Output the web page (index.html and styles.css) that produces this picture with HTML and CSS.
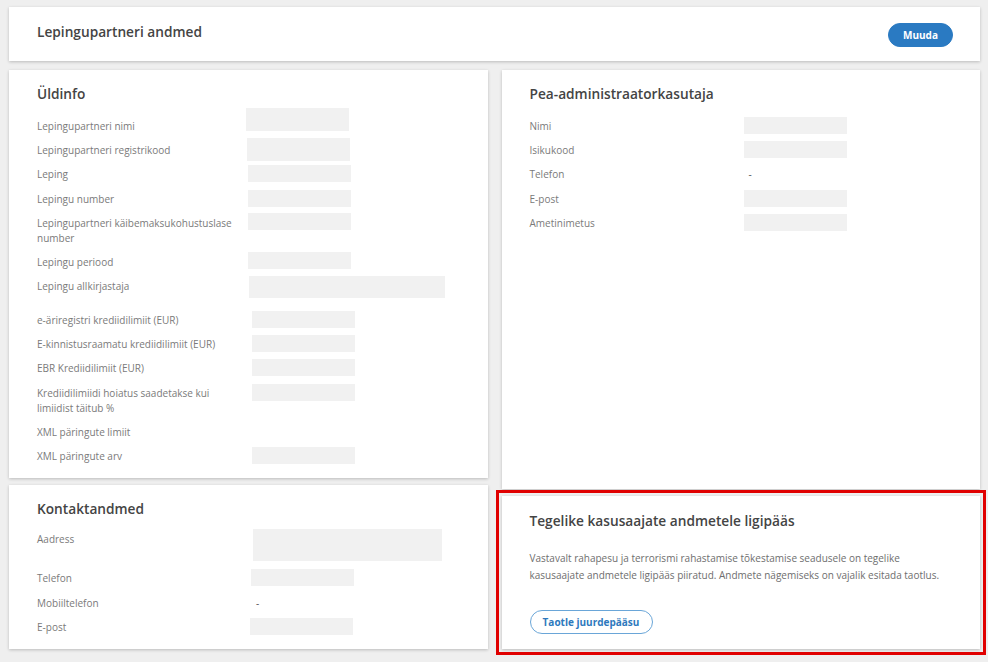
FILE: index.html
```html
<!DOCTYPE html>
<html lang="et">
<head>
<meta charset="utf-8">
<title>Lepingupartneri andmed</title>
<link rel="stylesheet" href="styles.css">
</head>
<body>
<div class="page">
  <header class="card topbar">
    <h1 class="topbar-title">Lepingupartneri andmed</h1>
    <button class="btn btn-primary" type="button">Muuda</button>
  </header>

  <div class="columns">
    <div class="col">
      <section class="card panel">
        <h2 class="panel-title">Üldinfo</h2>
        <div class="fields">
          <div class="row"><span class="label">Lepingupartneri nimi</span><span class="ph ph-tall ph-up"></span></div>
          <div class="row"><span class="label">Lepingupartneri registrikood</span><span class="ph ph-tall ph-mid"></span></div>
          <div class="row"><span class="label">Leping</span><span class="ph"></span></div>
          <div class="row"><span class="label">Lepingu number</span><span class="ph"></span></div>
          <div class="row"><span class="label">Lepingupartneri käibemaksukohustuslase number</span><span class="ph ph-r1"></span></div>
          <div class="row"><span class="label">Lepingu periood</span><span class="ph ph-r1"></span></div>
          <div class="row"><span class="label">Lepingu allkirjastaja</span><span class="ph ph-wide"></span></div>
          <div class="row"><span class="label">e-äriregistri krediidilimiit (EUR)</span><span class="ph ph-r2"></span></div>
          <div class="row"><span class="label">E-kinnistusraamatu krediidilimiit (EUR)</span><span class="ph ph-r2"></span></div>
          <div class="row"><span class="label">EBR Krediidilimiit (EUR)</span><span class="ph ph-r2"></span></div>
          <div class="row"><span class="label">Krediidilimiidi hoiatus saadetakse kui limiidist täitub %</span><span class="ph ph-r2"></span></div>
          <div class="row"><span class="label">XML päringute limiit</span><span class="value"></span></div>
          <div class="row"><span class="label">XML päringute arv</span><span class="ph ph-r2"></span></div>
        </div>
      </section>

      <section class="card panel panel-contact">
        <h2 class="panel-title">Kontaktandmed</h2>
        <div class="fields fields-contact">
          <div class="row"><span class="label">Aadress</span><span class="ph ph-addr"></span></div>
          <div class="row"><span class="label">Telefon</span><span class="ph"></span></div>
          <div class="row"><span class="label">Mobiiltelefon</span><span class="value dash">-</span></div>
          <div class="row"><span class="label">E-post</span><span class="ph ph-l1"></span></div>
        </div>
      </section>
    </div>

    <div class="col">
      <section class="card panel grow">
        <h2 class="panel-title">Pea-administraatorkasutaja</h2>
        <div class="fields fields-admin">
          <div class="row"><span class="label">Nimi</span><span class="ph"></span></div>
          <div class="row"><span class="label">Isikukood</span><span class="ph"></span></div>
          <div class="row"><span class="label">Telefon</span><span class="value dash">-</span></div>
          <div class="row"><span class="label">E-post</span><span class="ph"></span></div>
          <div class="row"><span class="label">Ametinimetus</span><span class="ph"></span></div>
        </div>
      </section>

      <section class="card panel notice">
        <h2 class="panel-title">Tegelike kasusaajate andmetele ligipääs</h2>
        <p class="notice-text">Vastavalt rahapesu ja terrorismi rahastamise tõkestamise seadusele on tegelike<br>kasusaajate andmetele ligipääs piiratud. Andmete nägemiseks on vajalik esitada taotlus.</p>
        <button class="btn btn-outline" type="button">Taotle juurdepääsu</button>
      </section>
    </div>
  </div>
</div>
</body>
</html>
```

FILE: styles.css
```css
* {
  box-sizing: border-box;
}

html, body {
  margin: 0;
  padding: 0;
}

body {
  background: #efefef;
  font-family: "Open Sans", "Noto Sans", "Liberation Sans", sans-serif;
  color: #4a4a4a;
  width: 988px;
  height: 662px;
  overflow: hidden;
}

.page {
  padding: 7px 8px 0 9px;
}

.card {
  background: #ffffff;
  box-shadow: 0 1px 3px rgba(0, 0, 0, 0.22);
}

/* top bar */
.topbar {
  height: 54px;
  display: flex;
  align-items: center;
  justify-content: space-between;
  padding: 0 27px 0 28px;
}

.topbar-title {
  margin: 0 0 5px 0;
  font-size: 13.7px;
  line-height: 20px;
  font-weight: 600;
  color: #444444;
}

.btn {
  font-family: "Open Sans", "Noto Sans", "Liberation Sans", sans-serif;
  font-size: 10px;
  font-weight: 700;
  height: 24px;
  border-radius: 12px;
  cursor: pointer;
  padding: 0;
}

.btn-primary {
  width: 65px;
  margin-top: 1px;
  background: #2a7ac2;
  border: 1px solid #2a7ac2;
  color: #ffffff;
}

.btn-outline {
  width: 123px;
  background: #ffffff;
  border: 1px solid #6aa6d8;
  color: #2e79bd;
}

/* columns */
.columns {
  margin-top: 9px;
  display: grid;
  grid-template-columns: 1fr 1fr;
  column-gap: 14px;
}

.col {
  display: flex;
  flex-direction: column;
  gap: 7px;
}

.panel {
  padding: 13.5px 28px 9.6px 28px;
}

.grow {
  flex: 1;
}

.panel-title {
  margin: 0 0 11px 0;
  font-size: 13.7px;
  line-height: 20px;
  font-weight: 600;
  color: #444444;
}

.panel-contact .panel-title {
  margin-bottom: 9px;
}

/* fields */
.fields {
  font-size: 10px;
  line-height: 15px;
  color: #7a7a7a;
}

.row {
  display: grid;
  grid-template-columns: 211px 1fr;
  align-items: start;
  padding: 4.6px 0;
}

.fields-admin .row {
  grid-template-columns: 214px 1fr;
}

.fields-contact .row {
  grid-template-columns: 214px 1fr;
}

.label {
  padding-right: 10px;
}

.value {
  color: #555555;
}

.dash {
  padding-left: 5px;
}

/* redacted value blocks */
.ph {
  display: block;
  width: 103px;
  height: 17px;
  margin-top: -2px;
  margin-bottom: -10px;
  background: #f1f1f1;
}

.ph-tall {
  height: 23px;
}

.ph-up {
  margin-top: -11px;
  margin-left: -2px;
}

.ph-mid {
  margin-top: -5.5px;
  margin-left: -1px;
}

.ph-r1 {
  margin-left: 0;
  margin-top: -2.7px;
}

.ph-r2 {
  margin-left: 4px;
}

.ph-l1 {
  margin-left: -1px;
}

.ph-wide {
  width: 196px;
  height: 22px;
  margin-top: -3px;
  margin-bottom: 5.6px;
  margin-left: 1px;
}

.ph-addr {
  width: 189px;
  height: 32px;
  margin-top: -3px;
  margin-bottom: 1px;
  margin-left: 2px;
}

/* notice */
.notice {
  padding: 15px 28px 15px 28px;
  outline: 3px solid #e00000;
  outline-offset: 3px;
}

.notice .panel-title {
  margin-bottom: 18.5px;
}

.notice-text {
  margin: 0 0 25px 0;
  font-size: 10px;
  line-height: 17px;
  color: #6e6e6e;
  white-space: nowrap;
}
```
